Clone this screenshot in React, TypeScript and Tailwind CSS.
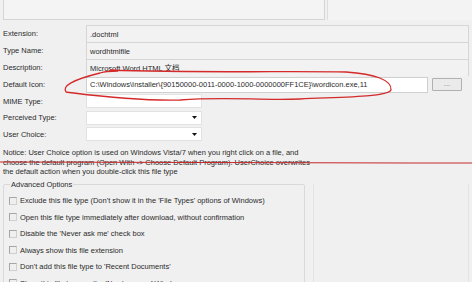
import React from "react";

const font = "font-['Liberation_Sans','Noto_Sans_CJK_SC',Arial,sans-serif]";

function Label({ children }: { children: React.ReactNode }) {
  return <div className="w-[83px] shrink-0 whitespace-nowrap">{children}</div>;
}

function Arrow() {
  return (
    <svg width="5" height="3" viewBox="0 0 5 3" className="mr-[4px]">
      <path d="M0 0 L5 0 L2.5 3 Z" fill="#111" />
    </svg>
  );
}

const options = [
  "Exclude  this file type (Don't show it in the 'File Types' options of Windows)",
  "Open this file type immediately after download, without confirmation",
  "Disable the 'Never ask me' check box",
  "Always show this file extension",
  "Don't add this file type to 'Recent Documents'",
  "Show this file type on the 'New' menu of Windows",
];

export default function App() {
  return (
    <div
      className={`relative w-[472px] h-[282px] overflow-hidden bg-[#f0f0f0] text-[7.5px] leading-[9px] text-[#2b2b2b] ${font}`}
    >
      {/* top panels */}
      <div className="flex h-[20px]">
        <div className="ml-[3px] w-[322px] border border-t-0 border-[#d4d4d4] bg-[#f4f4f4]" />
        <div className="ml-[2px] flex-1 border-l border-[#dedede] bg-[#f3f3f3]" />
      </div>

      {/* properties */}
      <div className="mt-[5px] pl-[3px] flex flex-col">
        <div className="flex items-center h-[17px]">
          <Label>Extension:</Label>
          <div className="w-[383px] h-[17px] border border-b-0 border-[#d6d6d6] bg-[#f2f2f2] flex items-center pl-[3px]">
            .dochtml
          </div>
        </div>
        <div className="flex items-center h-[17px]">
          <Label>Type Name:</Label>
          <div className="w-[383px] h-[17px] border border-b-0 border-[#d6d6d6] bg-[#f2f2f2] flex items-center pl-[3px]">
            wordhtmlfile
          </div>
        </div>
        <div className="flex items-center h-[17px]">
          <Label>Description:</Label>
          <div className="w-[383px] h-[17px] border border-b-0 border-[#d6d6d6] bg-[#f2f2f2] flex items-center pl-[3px]">
            Microsoft Word HTML 文档
          </div>
        </div>
        <div className="flex items-center h-[17px]">
          <Label>Default Icon:</Label>
          <div className="w-[342px] h-[16px] border border-[#d0d0d0] bg-white flex items-center pl-[3px] whitespace-nowrap">
            C:\Windows\Installer\{"{"}90150000-0011-0000-1000-0000000FF1CE{"}"}\wordicon.exe,11
          </div>
          <div className="ml-[4px] w-[30px] h-[13px] border border-[#b0b0b0] bg-[#ebebeb] rounded-[1px] flex items-center justify-center text-[#777] leading-none pb-[2px]">
            ...
          </div>
        </div>
        <div className="flex items-center h-[16px]">
          <Label>MIME Type:</Label>
          <div className="w-[116px] h-[14px] border border-[#e2e2e2] bg-white" />
        </div>
        <div className="flex items-center h-[17px]">
          <Label>Perceived Type:</Label>
          <div className="w-[116px] h-[14px] border border-[#e2e2e2] bg-white flex items-center justify-end">
            <Arrow />
          </div>
        </div>
        <div className="flex items-center h-[16px]">
          <Label>User Choice:</Label>
          <div className="w-[116px] h-[14px] border border-[#e2e2e2] bg-white flex items-center justify-end">
            <Arrow />
          </div>
        </div>
      </div>

      {/* notice */}
      <div className="mt-[6px] pl-[3px] leading-[9.5px] whitespace-nowrap">
        Notice: User Choice option is used on Windows Vista/7 when you right click on a file, and
        <br />
        choose the default program (Open With -&gt; Choose Default Program). UserChoice overwrites
        <br />
        the default action when you double-click this file type
      </div>

      {/* advanced options */}
      <div className="mt-[3px] flex">
        <fieldset className="ml-[3px] w-[302px] h-[110px] border border-[#d9d9d9] rounded-[2px] pl-[5px]">
          <legend className="ml-[1px] px-[1px] leading-[9px]">Advanced Options</legend>
          <div className="pt-[4px] flex flex-col">
            {options.map((o) => (
              <div key={o} className="flex items-center h-[16.5px] whitespace-nowrap">
                <div className="w-[8px] h-[8px] border border-[#a5a5a5] border-r-[#cfcfcf] border-b-[#cfcfcf] bg-[#efefef] mr-[3px]" />
                <span>{o}</span>
              </div>
            ))}
          </div>
        </fieldset>
        <div className="ml-[8px] mt-[4px] w-[156px] h-[110px] border-l border-r border-[#e3e3e3]" />
      </div>

      {/* red annotations */}
      <svg
        className="absolute left-0 top-0 pointer-events-none"
        width="472"
        height="282"
        viewBox="0 0 472 282"
      >
        <path
          d="M110 70 C180 73 300 71 346 72 C375 74 392 80 391 90 C388 97 340 97 300 99 C260 101 230 96 180 100 C130 101 90 95 66 92 C62 86 72 80 100 73 C106 71 112 71 118 71"
          fill="none"
          stroke="#d42a2a"
          strokeWidth="1.3"
        />
        <path d="M0 162 C120 162.5 300 163 472 163" fill="none" stroke="#c62828" strokeWidth="1.1" />
      </svg>
    </div>
  );
}
